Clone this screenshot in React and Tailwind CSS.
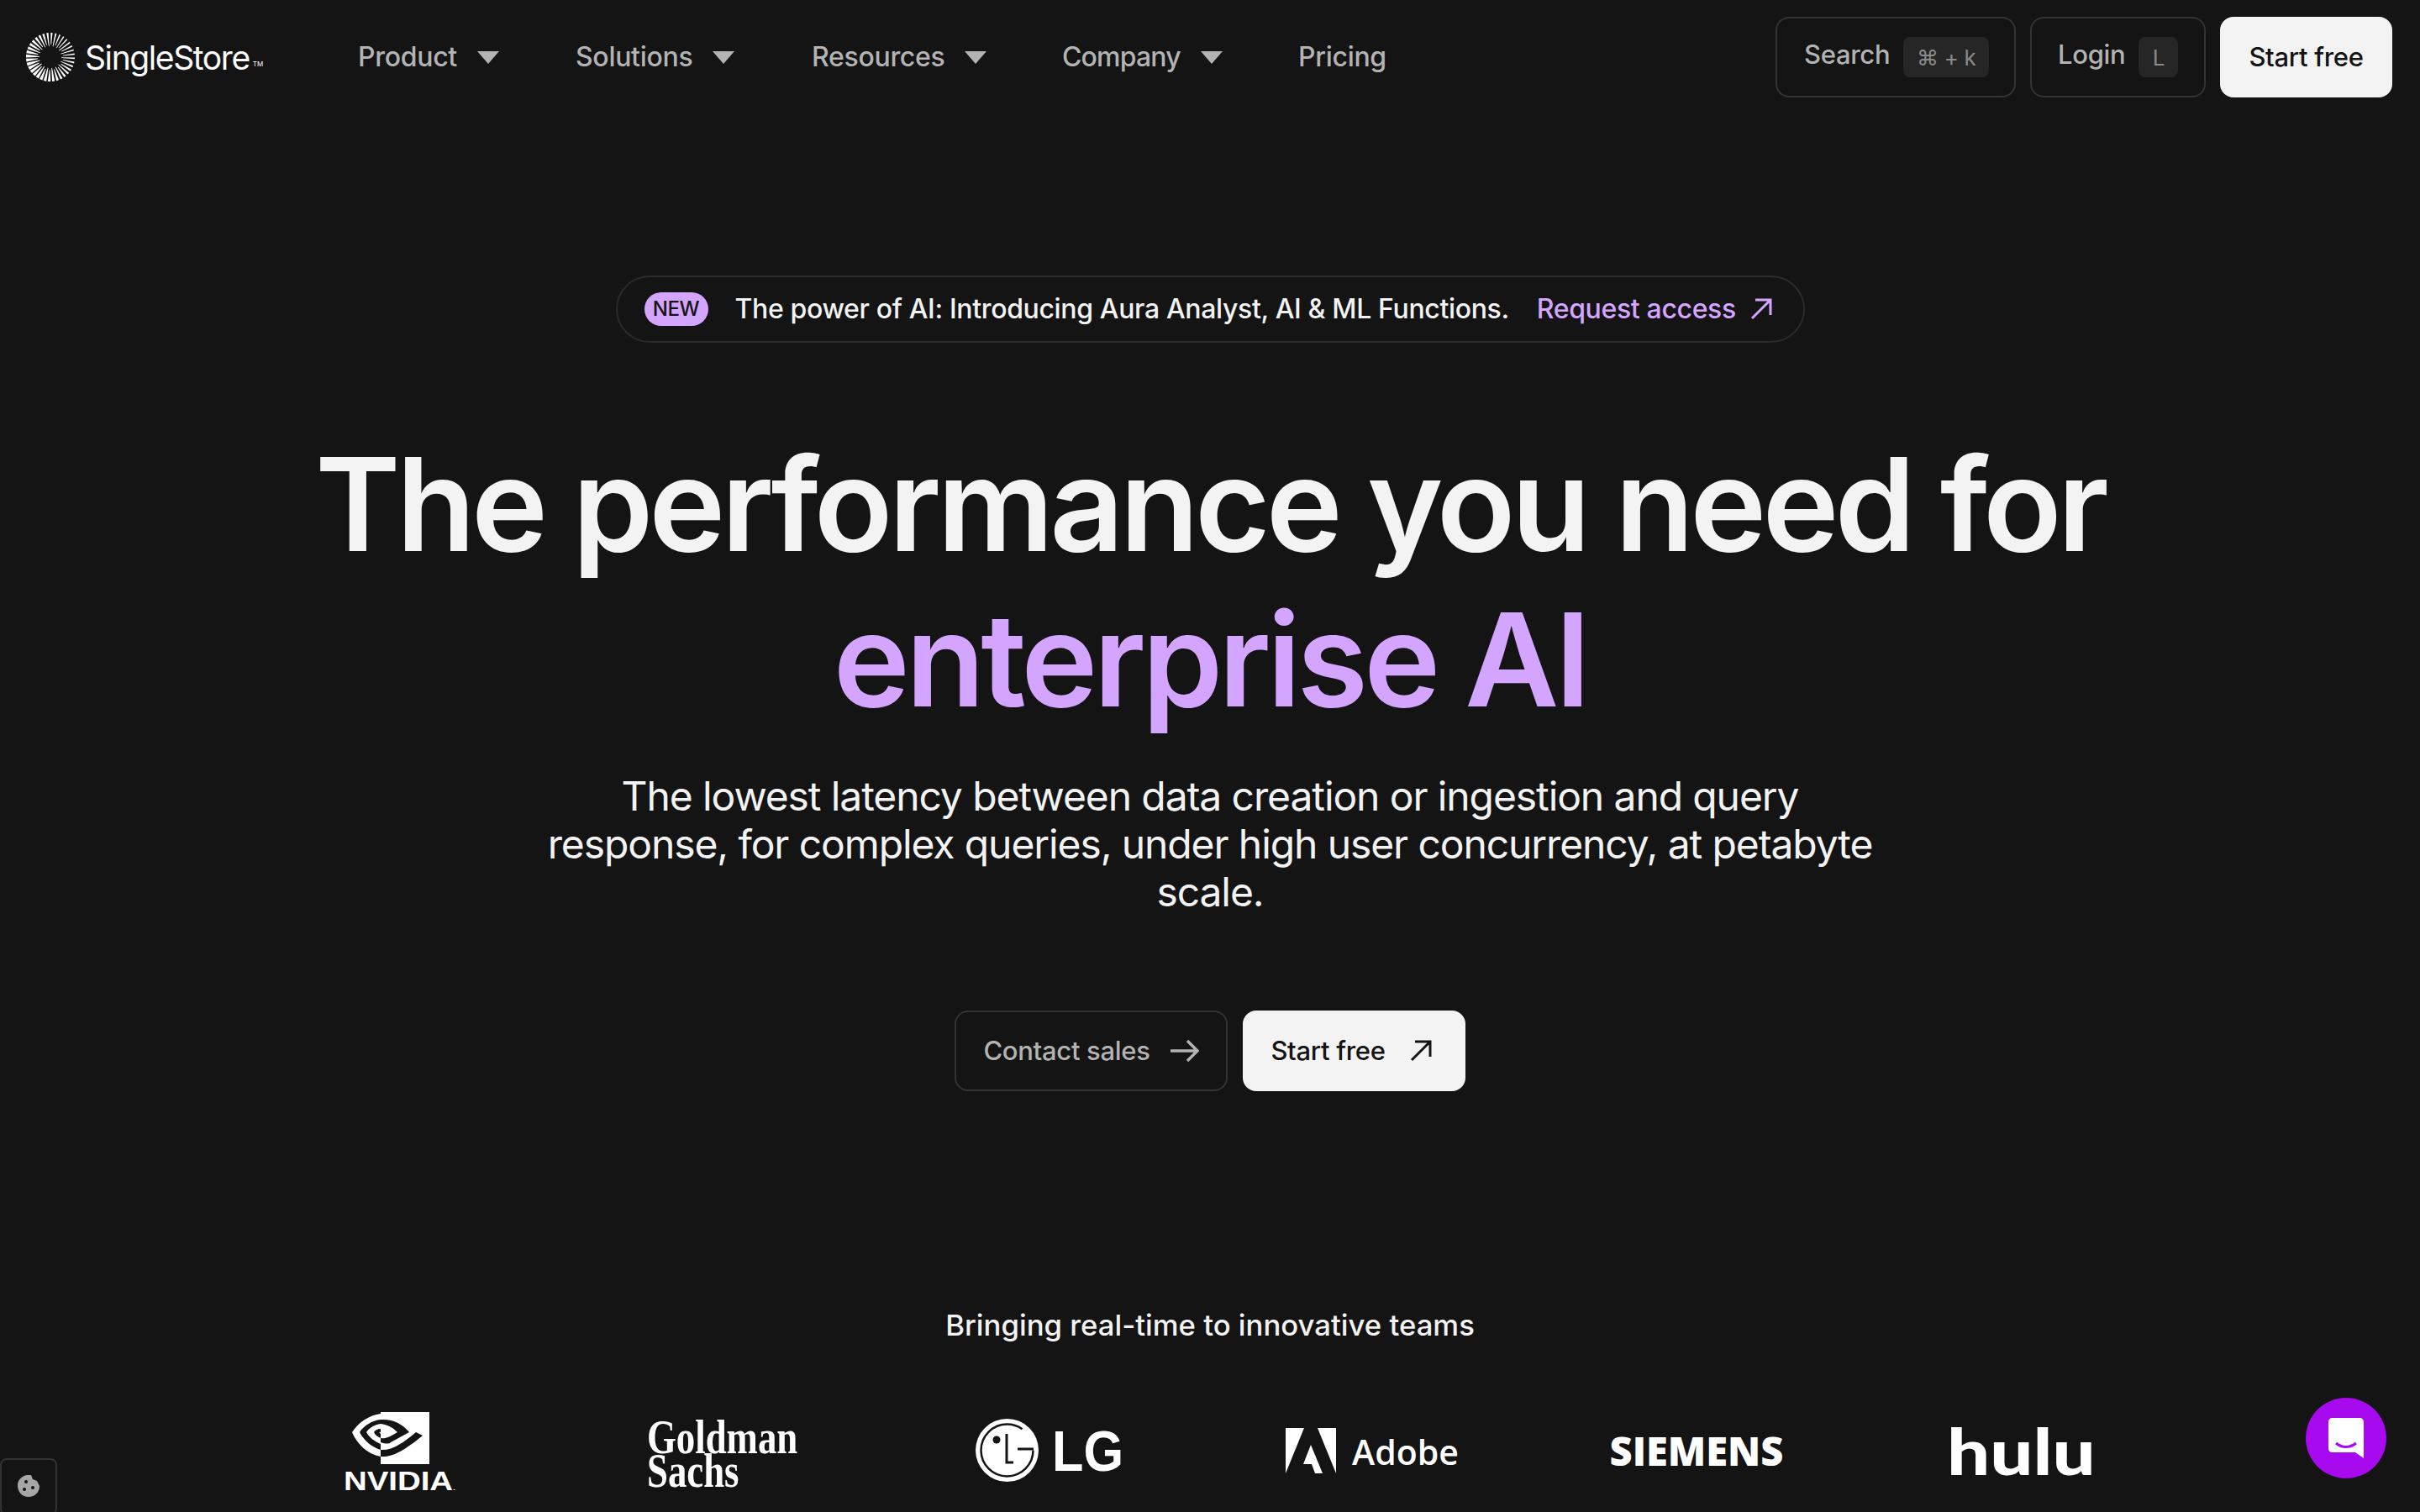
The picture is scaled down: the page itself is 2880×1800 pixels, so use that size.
import React from "react";

const Sun = () => {
  const rays = [];
  const n = 36;
  for (let i = 0; i < n; i++) {
    const a = (i / n) * Math.PI * 2 + 0.05;
    const k = 0.5 + 0.5 * Math.cos(a - 2.6);
    const w1 = 0.35;
    const w2 = 0.8 + 1.15 * k;
    const r1 = 13 + (i % 2) * 2;
    const r2 = 29;
    const cx = Math.cos(a), sx = Math.sin(a);
    const pts = [
      [30 + r1 * cx - w1 * sx, 30 + r1 * sx + w1 * cx],
      [30 + r2 * cx - w2 * sx, 30 + r2 * sx + w2 * cx],
      [30 + r2 * cx + w2 * sx, 30 + r2 * sx - w2 * cx],
      [30 + r1 * cx + w1 * sx, 30 + r1 * sx - w1 * cx],
    ].map((p) => p.join(",")).join(" ");
    rays.push(<polygon key={i} points={pts} fill="#fff" />);
  }
  return <svg width="60" height="60" viewBox="0 0 60 60">{rays}</svg>;
};

const Caret = () => (
  <svg width="26" height="15" viewBox="0 0 26 15" className="ml-6"><path d="M0 0H26L13 15Z" fill="#b3b3b3" /></svg>
);

const ArrowUR = ({ c }) => (
  <svg width="28" height="28" viewBox="0 0 28 28" fill="none" stroke={c} strokeWidth="3"><path d="M3 25L25 3M7 3H25V21" /></svg>
);

const NavItem = ({ label, w }) => (
  <div className={`flex items-center ${w}`}>
    <span>{label}</span>
    <Caret />
  </div>
);

const Nvidia = () => (
  <div className="flex w-[130px] flex-col items-center">
    <svg width="92" height="62" viewBox="0 0 92 62" className="mr-[20px]">
      <path d="M34 0H92V62H34V53C18 50 6 38 0 24C8 12 20 4 34 2Z" fill="#fff" />
      <path d="M34 9C24 10 14 16 9 24C14 34 24 42 34 45V38C27 35 20 30 17 24C20 19 27 15 34 14Z" fill="#141414" />
      <path d="M34 20C30 20 27 22 26 24C27 27 30 29 34 31V26C32 25 32 23 34 24Z" fill="#141414" />
      <path d="M34 9C48 8 60 14 68 24L46 36C44 38 40 38 34 36V31C40 32 44 30 54 24C48 18 42 15 34 14Z" fill="#141414" />
      <path d="M34 53C48 54 62 46 84 28L76 24C62 36 48 46 34 45Z" fill="#141414" />
    </svg>
    <div className="mt-[6px] scale-x-[1.2] font-['Liberation_Sans',sans-serif] text-[32px] font-bold leading-[28px] text-white">NVIDIA<span className="text-[8px]">.</span></div>
  </div>
);

const Goldman = () => (
  <div className="mb-[6px] w-[182px] origin-left scale-x-[0.8] whitespace-nowrap font-['Liberation_Serif',serif] text-[56px] font-bold leading-[40px] text-white">
    Goldman<br />Sachs
  </div>
);

const LG = () => (
  <div className="mb-[14px] flex items-center gap-[16px]">
    <svg width="75" height="75" viewBox="0 0 75 75">
      <circle cx="37.5" cy="37.5" r="37.5" fill="#fff" />
      <circle cx="37.5" cy="37.5" r="31" fill="none" stroke="#141414" strokeWidth="2.5" strokeDasharray="165 30" />
      <circle cx="25" cy="25" r="4.5" fill="#141414" />
      <path d="M37 18V52H45M50 36H69" fill="none" stroke="#141414" strokeWidth="3" />
    </svg>
    <span className="w-[82px] origin-left scale-x-[0.9] font-['Liberation_Sans',sans-serif] text-[68px] font-bold leading-[66px] text-white">LG</span>
  </div>
);

const Adobe = () => (
  <div className="mb-[14px] flex items-center gap-[19px]">
    <svg width="60" height="54" viewBox="0 0 60 54"><path d="M0 0H22L0 54ZM38 0H60V54ZM30 20L44 54H35L31 43H21Z" fill="#fff" /></svg>
    <span className="mt-[4px] font-['Open_Sans',sans-serif] text-[41px] font-semibold leading-[43px] text-white">Adobe</span>
  </div>
);

const Siemens = () => (
  <span className="mb-[14px] font-['Open_Sans',sans-serif] text-[47px] font-extrabold leading-[46px] text-white">SIEMENS</span>
);

const Hulu = () => (
  <span className="mb-[14px] scale-x-[1.19] font-['Lato',sans-serif] text-[76px] font-black leading-[76px] text-white">hulu</span>
);

export default function App() {
  return (
    <div className="relative h-[1800px] overflow-hidden bg-[#141414] font-['Inter',sans-serif] text-[#f3f3f3]">
      <header className="flex h-[136px] items-center pl-[30px] pr-[33px]">
        <div className="flex w-[396px] items-center">
          <Sun />
          <span className="ml-[11px] text-[39px] leading-none tracking-[-1.4px] text-white">SingleStore</span>
          <span className="ml-[4px] mt-[16px] text-[8px] text-white">TM</span>
        </div>
        <nav className="flex flex-1 items-center text-[32px] font-medium tracking-[-0.3px] text-[#b3b3b3]">
          <NavItem label="Product" w="w-[259px]" />
          <NavItem label="Solutions" w="w-[281px]" />
          <NavItem label="Resources" w="w-[298px]" />
          <NavItem label="Company" w="w-[281px] tracking-[-0.85px]" />
          <span>Pricing</span>
        </nav>
        <div className="flex items-center gap-[17px] text-[31px] font-medium tracking-[-0.3px]">
          <div className="flex h-[96px] w-[286px] items-center rounded-2xl border-2 border-[#333333] pl-[32px] text-[#b3b3b3]">
            <span className="mb-[5px]">Search</span>
            <span className="ml-[16px] flex h-[48px] w-[102px] items-center justify-center rounded-lg bg-[#262626] text-[26px] font-normal text-[#8a8a8a]">⌘ + k</span>
          </div>
          <div className="flex h-[96px] w-[209px] items-center rounded-2xl border-2 border-[#333333] pl-[31px] text-[#b3b3b3]">
            <span className="mb-[5px]">Login</span>
            <span className="ml-[16px] flex h-[48px] w-[47px] items-center justify-center rounded-lg bg-[#262626] text-[26px] font-normal text-[#8a8a8a]">L</span>
          </div>
          <div className="flex h-[96px] w-[205px] items-center justify-center rounded-2xl bg-[#f3f3f3] text-[#141414]">Start free</div>
        </div>
      </header>

      <main className="flex flex-col items-center">
        <div className="mt-[192px] flex h-[80px] w-[1415px] items-center rounded-full border-2 border-[#2b2b2b] pl-[32px] text-[32px] font-medium tracking-[-0.35px]">
          <span className="flex h-[40px] w-[76px] items-center justify-center rounded-full bg-[#d4a5ff] text-[24px] text-[#141414]">NEW</span>
          <span className="ml-[32px]">The power of AI: Introducing Aura Analyst, AI &amp; ML Functions.</span>
          <span className="ml-[33px] text-[#d4a5ff]">Request access</span>
          <span className="ml-[16px]"><ArrowUR c="#d4a5ff" /></span>
        </div>

        <h1 className="mt-[100px] text-center text-[154px] font-semibold leading-[185px] tracking-[-4.9px]">
          <div>The performance you need for</div>
          <div className="text-[#d4a5ff]">enterprise AI</div>
        </h1>

        <p className="mt-[41px] w-[1600px] text-center text-[48px] leading-[57px] tracking-[-1.1px]">
          The lowest latency between data creation or ingestion and query response, for complex queries, under high user concurrency, at petabyte scale.
        </p>

        <div className="mt-[113px] flex items-center gap-[18px] text-[31px] font-medium tracking-[-0.3px]">
          <div className="flex h-[96px] w-[325px] items-center justify-center gap-[24px] rounded-2xl border-2 border-[#333333] text-[#b3b3b3]">
            <span>Contact sales</span>
            <svg width="34" height="28" viewBox="0 0 34 28" fill="none" stroke="#b3b3b3" strokeWidth="3.4"><path d="M0 14H32M20 2L32 14L20 26" /></svg>
          </div>
          <div className="flex h-[96px] w-[265px] items-center justify-center gap-[28px] rounded-2xl bg-[#f3f3f3] pr-[6px] text-[#141414]">
            <span>Start free</span>
            <ArrowUR c="#141414" />
          </div>
        </div>

        <div className="mt-[256px] text-[34.7px] font-medium leading-[44px]">Bringing real-time to innovative teams</div>

        <div className="mt-[82px] grid w-[2316px] grid-cols-6 items-center justify-items-center">
          <Nvidia />
          <Goldman />
          <LG />
          <Adobe />
          <Siemens />
          <Hulu />
        </div>
      </main>

      <div className="absolute bottom-[-4px] left-[0px] flex h-[68px] w-[68px] items-center justify-center rounded-lg border-2 border-[#333333]">
        <svg width="28" height="28" viewBox="0 0 28 28" className="mb-[2px]">
          <path d="M12 1L17 1L19 6L24 8L27 14C27 22 21 27 14 27C6 27 1 21 1 13C1 7 6 2 12 1Z" fill="#a6a6a6" />
          <circle cx="11" cy="9" r="2" fill="#141414" /><circle cx="9" cy="18" r="2" fill="#141414" /><circle cx="19" cy="16" r="2" fill="#141414" />
        </svg>
      </div>

      <div className="absolute left-[2744px] top-[1664px] flex h-[96px] w-[96px] items-center justify-center rounded-full bg-[#a80af0]">
        <svg width="42" height="48" viewBox="0 0 42 48">
          <path d="M5 0H37C40 0 42 2 42 5V48L32 41H5C2 41 0 39 0 36V5C0 2 2 0 5 0Z" fill="#fff" />
          <path d="M9 30C16 36 26 36 33 30" fill="none" stroke="#a80af0" strokeWidth="3" />
        </svg>
      </div>
    </div>
  );
}
